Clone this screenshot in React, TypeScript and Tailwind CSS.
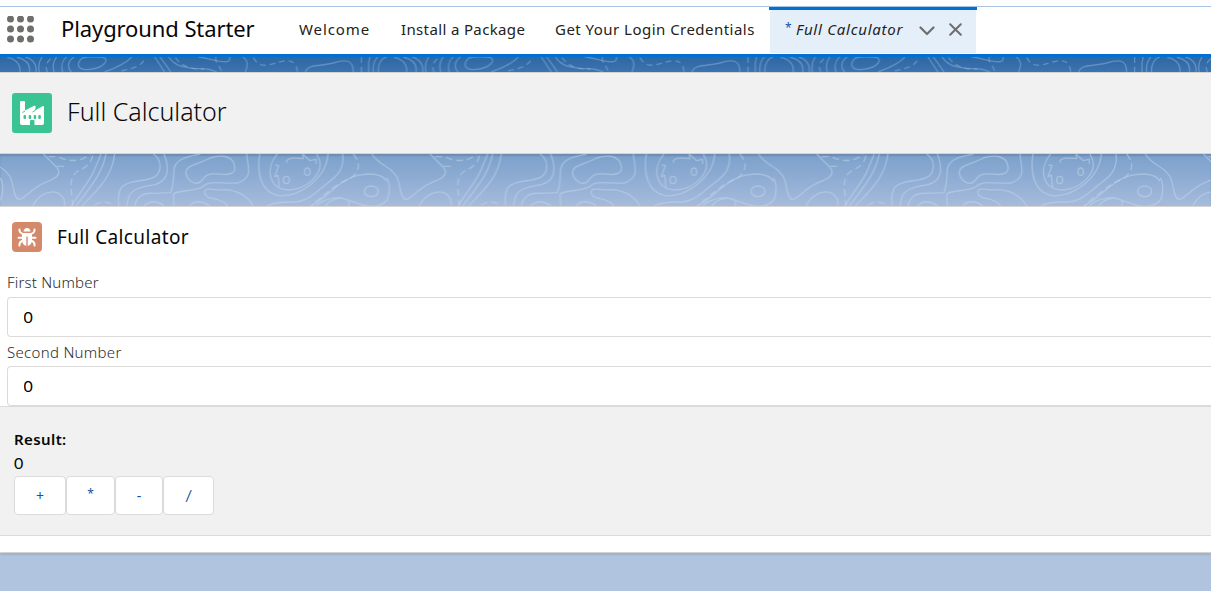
import type { ReactNode } from "react";

const navItems = [
  { label: "Welcome", className: "ml-[45px] w-[71px] tracking-[0.9px]" },
  { label: "Install a Package", className: "ml-[31px] w-[124px] tracking-[0.36px]" },
  { label: "Get Your Login Credentials", className: "ml-[30px] w-[200px] tracking-[0.47px]" },
];

const operators = [
  { sign: "+", className: "w-[52px] text-[14px]" },
  { sign: "*", className: "w-[49px] text-[12px] pb-1" },
  { sign: "-", className: "w-[48px] text-[14px]" },
  { sign: "/", className: "w-[51px] text-[16px] font-['Lato',sans-serif] pb-0.5" },
];

function AppLauncher() {
  return (
    <svg className="ml-[7px] mt-[15px] h-[27px] w-[27px] shrink-0" viewBox="0 0 27 27" fill="#706e6b">
      {[3.5, 13.5, 23.5].map((y) =>
        [3.5, 13.5, 23.5].map((x) => <circle key={`${x}-${y}`} cx={x} cy={y - 0.5} r="3.5" />)
      )}
    </svg>
  );
}

/* Contour lines under the navigation bar, one tile is 387px wide. */
function UpperContours() {
  return (
    <svg className="block h-[15px] w-full" fill="none">
      <defs>
        <pattern id="upper" width="1160" height="45" patternUnits="userSpaceOnUse" patternTransform="scale(.33333)">
          <g stroke="#9dbde0" strokeOpacity=".42" strokeWidth="4">
            <path d="M22 2C45 5 62 20 60 45M50 0C82 8 92 25 88 45M76 0C92 3 112 18 108 45M126 0C116 15 114 30 118 45M170 0C160 12 158 30 162 45M200 0C184 12 184 32 188 45M222 0C204 12 200 30 214 45" />
            <path d="M246 3C225 24 236 42 270 37C315 32 330 5 308 1C285-1 264-1 246 3M395 0C380 17 355 30 314 45M464 0L494 45M480 0C495 20 502 28 512 45M506 0C520 22 540 30 578 34C610 38 616 29 650 45M595 0C626 2 650 17 682 14C690 12 690 5 690 0M728 0C748 12 742 30 736 45M916 45C925 20 965 28 1000 18C1040 5 1060 10 1060 45M1106 45V16L1110 0M1120 45C1117 20 1125 8 1133 0M1135 45C1133 22 1144 3 1160 0" />
          </g>
          <g stroke="#9dbde0" strokeOpacity=".42" strokeWidth="4" strokeDasharray="17 12">
            <path d="M152 5C137 18 136 30 142 45M365 42C398 35 434 25 434 0M526 2C548 32 578 37 612 36M648 0C642 18 662 24 664 45M760 2C780 38 812 22 838 15C870 6 890 12 892 45M1084 0V45" />
          </g>
        </pattern>
      </defs>
      <rect width="100%" height="15" fill="url(#upper)" />
    </svg>
  );
}

/* Contour lines between the page header and the card. */
function LowerContours() {
  return (
    <svg className="block h-[52px] w-full" fill="none">
      <defs>
        <pattern id="lower" width="1160" height="156" patternUnits="userSpaceOnUse" patternTransform="scale(.33333)">
          <g stroke="#c3d5ec" strokeOpacity=".5" strokeWidth="4" strokeLinejoin="round">
            <path d="M130 0L170 40C190 65 160 76 130 88C95 103 75 134 58 136C38 136 42 82 28 65C18 52 8 43 0 39M0 72C12 87 10 125 0 140M98 156C118 118 155 106 178 119C195 132 196 144 192 156M303 0L280 55C262 90 238 116 214 156M318 0C306 60 272 97 228 156M344 0C335 72 290 110 246 156" />
            <path d="M460 0C490 20 483 60 461 70C430 85 385 76 362 103C355 120 354 140 357 156M492 0C510 45 505 82 464 92C420 99 392 107 386 130L380 156M404 156C410 128 426 116 459 118L512 116C530 70 510 42 536 22C555 6 580 6 600 0M432 156C445 141 472 139 492 156M740 0C744 45 760 68 714 87C660 90 630 77 608 98C590 112 520 109 520 122L522 156M570 156C575 141 610 139 628 156M558 58C555 32 600 30 630 12C660 2 695 4 702 30C712 58 690 63 670 61C638 58 620 57 607 78C590 99 563 82 558 58Z" />
            <path d="M682 156C660 125 622 142 614 118C610 94 640 112 676 107C724 111 748 135 760 156M779 0C770 60 783 115 835 125C890 130 978 80 984 0M832 0C795 42 806 108 866 108C923 106 970 57 958 18L950 0M826 33L836 35L824 68L834 64L838 100M860 26C858 12 880 10 910 14L908 0L930 20L948 16L948 30M1028 0C1035 50 1005 70 978 91C940 122 915 147 878 144C850 144 820 145 802 156" />
            <ellipse cx="859" cy="78" rx="9" ry="11" /><ellipse cx="922" cy="53" rx="8" ry="11" />
            <ellipse cx="1114" cy="112" rx="21" ry="16" />
            <path d="M1116 0C1125 17 1140 27 1160 39M932 156C990 126 1019 70 1088 62C1130 55 1170 65 1168 116C1167 148 1135 158 1114 157C1080 157 1048 135 1019 131C978 132 955 147 950 156M976 156C991 133 1035 124 1048 145L1045 156" />
          </g>
          <g stroke="#c3d5ec" strokeOpacity=".5" strokeWidth="4" strokeDasharray="20 12">
            <path d="M146 8H168M172 37H192M178 10C207 24 245 24 270 0M278 5C272 34 250 43 234 51C202 72 216 110 218 156M284 154C300 141 325 141 340 154M1060 0C1085 30 1076 55 1053 72C1005 92 980 118 950 140L933 156" />
          </g>
        </pattern>
      </defs>
      <rect width="100%" height="52" fill="url(#lower)" />
    </svg>
  );
}

function FactoryIcon() {
  return (
    <div className="h-10 w-10 shrink-0 rounded-[3px] bg-[#3bc493]">
      <svg viewBox="0 0 40 40" className="h-10 w-10">
        <path fill="white" d="M9 8H12Q13 8 13 9V17.5L22 12.8Q24 12.2 23.6 14L23 17.5L30.5 13.2Q32 12.6 32 14V30Q32 32 30 32H22.5V28Q22.5 27 21.5 27H19Q18 27 18 28V32H10Q8 32 8 30V9Q8 8 9 8Z" />
        <path d="M10.5 19.5L13 18M20.5 19L23.5 17.2" stroke="#3bc493" strokeWidth="1" />
        <g fill="#3bc493">
          <rect x="11.5" y="22" width="2.5" height="4" rx="1" /><rect x="16.7" y="22" width="2.5" height="4" rx="1" />
          <rect x="21.7" y="22" width="2.5" height="4" rx="1" /><rect x="26.3" y="22" width="2.5" height="4" rx="1" />
        </g>
      </svg>
    </div>
  );
}

function BugIcon() {
  return (
    <div className="h-[30px] w-[30px] shrink-0 rounded-[4px] bg-[#d48a6a]">
      <svg viewBox="0 0 30 30" className="h-[30px] w-[30px]" fill="white">
        <path d="M11.5 9.5Q12 6 15 6T18.5 9.5Z" />
        <path d="M10.5 11H19.5L20 12V19Q19.5 23 15.7 24V14.5H14.3V24Q10.5 23 10 19V12Z" />
        <path d="M7.5 7.5Q7 10.5 11 12M22.5 7.5Q23 10.5 19 12M6.5 15.8H11M23.5 15.8H19M11 18.5Q7 20 7.5 23.5M19 18.5Q23 20 22.5 23.5" fill="none" stroke="white" strokeWidth="2" strokeLinecap="round" />
      </svg>
    </div>
  );
}

function Field({ label, className, children }: { label: string; className: string; children: ReactNode }) {
  return (
    <label className="block pl-[7px]">
      <span className={`-mt-px block h-[21px] text-[15px] font-[350] leading-5 text-[#2b2b2a] ${className}`}>{label}</span>
      {children}
    </label>
  );
}

function NumberInput({ className }: { className: string }) {
  return (
    <input
      defaultValue="0"
      className={`block h-10 w-full rounded-l-[4px] border border-r-0 border-[#dddbda] bg-white pb-px pl-[15.5px] font-['Lato',sans-serif] text-[16px] text-black outline-none ${className}`}
    />
  );
}

export default function App() {
  return (
    <div className="h-[591px] overflow-hidden bg-[#b0c4df] font-['Noto_Sans',sans-serif] text-[#080707]">
      <header className="flex h-[57px] flex-col bg-white pt-1.5">
        <div className="flex h-12 shrink-0 border-t border-[#a9c4e2]">
          <div className="-mt-1.5 flex"><AppLauncher /></div>
          <div className="ml-[27px] mt-[6px] w-[193px] whitespace-nowrap text-[22px] leading-[30px] tracking-[-0.1px]">
            Playground Starter
          </div>
          <nav className="flex">
            {navItems.map((item) => (
              <a key={item.label} className={`mt-3 whitespace-nowrap text-[15px] leading-5 text-[#232221] ${item.className}`}>
                {item.label}
              </a>
            ))}
          </nav>
          <div className="ml-3.5 w-[208px] border-t-[3px] border-[#0070d2]">
            <div className="mx-px flex h-[43px] bg-[#e5effa] pl-[15px]">
              <span className="mt-[8px] w-[11px] text-[12px] leading-5 text-[#16529c]">*</span>
              <span className="mt-[9px] w-[109px] whitespace-nowrap text-[15px] italic leading-5 tracking-[0.75px] text-[#232221]">
                Full Calculator
              </span>
              <svg className="ml-[14px] mt-[16px] h-[10px] w-[16px]" viewBox="0 0 16 10" fill="none" stroke="#706e6b" strokeWidth="2.2" strokeLinecap="round" strokeLinejoin="round">
                <path d="M1.5 1.5L8 8L14.5 1.5" />
              </svg>
              <svg className="ml-[14px] mt-[13px] h-[13px] w-[13px]" viewBox="0 0 13 13" fill="none" stroke="#706e6b" strokeWidth="2" strokeLinecap="round">
                <path d="M1.2 1.2L11.8 11.8M11.8 1.2L1.2 11.8" />
              </svg>
            </div>
          </div>
        </div>
        <div className="h-[3px] bg-[#0070d2]" />
      </header>

      <div className="h-[15px] bg-linear-to-b from-[#2d67a4] to-[#3b74af]"><UpperContours /></div>

      <section className="flex h-[82px] border-y border-[#d4d4d2] bg-[#f1f1f1] pl-3 pt-5">
        <FactoryIcon />
        <h1 className="-mt-px ml-[15px] text-[25px] font-light leading-[38px]">Full Calculator</h1>
      </section>

      <div className="h-[52px] bg-linear-to-b from-[#7ba0cb] to-[#a5bbdc] shadow-[inset_0_2px_2px_rgba(0,0,0,0.13)]"><LowerContours /></div>

      <main className="h-[347px] border-y border-[#d4d4d2] bg-white shadow-[0_2px_2px_rgba(0,0,0,0.10)]">
        <div className="flex h-[66px] pl-3 pt-[15px]">
          <BugIcon />
          <h2 className="ml-[15px] mt-0.5 text-[19px] leading-[26px] tracking-[0.36px]">Full Calculator</h2>
        </div>
        <Field label="First Number" className="tracking-[0.2px]"><NumberInput className="mt-1" /></Field>
        <div className="mt-1.5">
          <Field label="Second Number" className="tracking-[0.3px]"><NumberInput className="mt-[3px]" /></Field>
        </div>
        <div className="h-[130px] border-y border-[#dddbda] bg-[#f1f1f1] pl-3.5 pt-5">
          <p className="text-[15px] font-semibold leading-6 tracking-[0.4px]">Result:</p>
          <p className="h-[25px] font-['Lato',sans-serif] text-[16px] leading-6">0</p>
          <div className="flex">
            {operators.map((op) => (
              <button
                key={op.sign}
                className={`h-[39px] rounded-[4px] border border-[#dddbda] bg-white text-[#16529c] ${op.className}`}
              >
                {op.sign}
              </button>
            ))}
          </div>
        </div>
      </main>
    </div>
  );
}
